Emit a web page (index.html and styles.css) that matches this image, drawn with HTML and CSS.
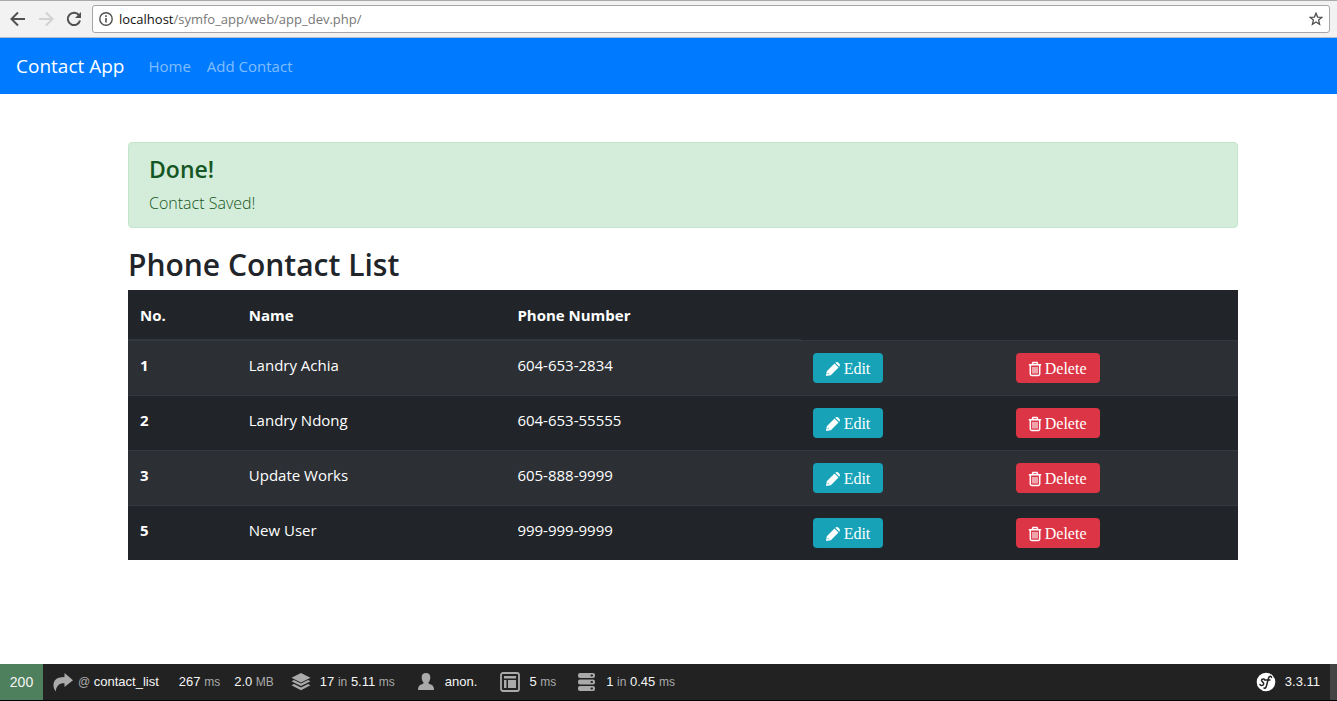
FILE: index.html
```html
<!DOCTYPE html>
<html lang="en">
<head>
<meta charset="utf-8">
<title>Contact App</title>
<link rel="stylesheet" href="styles.css">
</head>
<body>
<svg class="sprite" aria-hidden="true">
  <symbol id="pencil" viewBox="0 0 16 16"><path d="M1 15l.8-4.800L9.500 2.500l4 4-7.700 7.700zM10.300 1.700q1.500-1.500 3-.1l1.100 1.100q1.400 1.500-.1 3z" fill="#fff"/><path d="M2.800 12.200l1 1" stroke="#17a2b8" stroke-width="1"/></symbol>
  <symbol id="trash" viewBox="0 0 14 16"><path d="M.8 3.800h12.400M4.200 3.500l.8-2h4l.8 2M2.300 4v9q0 1.400 1.400 1.400h6.600q1.400 0 1.400-1.400V4" fill="none" stroke="#fff" stroke-width="1.500"/><path d="M5 6v6.500M7 6v6.500M9 6v6.500" stroke="#fff" stroke-width="1.100"/></symbol>
</svg>
<header class="browser">
  <button class="tool" aria-label="Back"><svg width="16" height="16" viewBox="0 0 16 16"><path d="M15 8H2M8 1.500L1.500 8 8 14.500" fill="none" stroke="#505050" stroke-width="2"/></svg></button>
  <button class="tool" aria-label="Forward" disabled><svg width="16" height="16" viewBox="0 0 16 16"><path d="M1 8h13M8 1.500L14.500 8 8 14.500" fill="none" stroke="#d2d2d2" stroke-width="2"/></svg></button>
  <button class="tool" aria-label="Reload"><svg width="16" height="16" viewBox="0 0 16 16"><path d="M13 4.200A6.200 6.200 0 1 0 14 9.500" fill="none" stroke="#505050" stroke-width="2"/><path d="M15 1v6H9z" fill="#505050"/></svg></button>
  <div class="address">
    <svg width="14" height="14" viewBox="0 0 14 14"><circle cx="7" cy="7" r="6.200" fill="none" stroke="#505050" stroke-width="1.400"/><path d="M6.200 6h1.600v4.500H6.200zM6.200 3.300h1.600v1.600H6.200z" fill="#505050"/></svg>
    <span class="url"><b>localhost</b>/symfo_app/web/app_dev.php/</span>
    <button class="star" aria-label="Bookmark this page"><svg width="14" height="14" viewBox="0 0 14 14"><path d="M7 1.200l1.600 3.900 4.200.3-3.200 2.700 1 4.200L7 10l-3.600 2.300 1-4.200L1.200 5.400l4.200-.3z" fill="none" stroke="#505050" stroke-width="1.300"/></svg></button>
  </div>
</header>
<nav class="navbar">
  <a class="brand" href="#">Contact App</a>
  <a class="link" href="#">Home</a>
  <a class="link" href="#">Add Contact</a>
</nav>
<main class="content">
  <div class="alert" role="alert">
    <h4>Done!</h4>
    <p>Contact Saved!</p>
  </div>
  <h2>Phone Contact List</h2>
  <table class="contacts">
    <colgroup><col class="c-no"><col class="c-name"><col class="c-phone"><col class="c-edit"><col></colgroup>
    <thead><tr><th>No.</th><th>Name</th><th>Phone Number</th><td></td><td></td></tr></thead>
    <tbody>
      <tr><th>1</th><td>Landry Achia</td><td>604-653-2834</td><td><a class="btn info" href="#"><svg><use href="#pencil"/></svg>Edit</a></td><td><a class="btn danger" href="#"><svg><use href="#trash"/></svg>Delete</a></td></tr>
      <tr><th>2</th><td>Landry Ndong</td><td>604-653-55555</td><td><a class="btn info" href="#"><svg><use href="#pencil"/></svg>Edit</a></td><td><a class="btn danger" href="#"><svg><use href="#trash"/></svg>Delete</a></td></tr>
      <tr><th>3</th><td>Update Works</td><td>605-888-9999</td><td><a class="btn info" href="#"><svg><use href="#pencil"/></svg>Edit</a></td><td><a class="btn danger" href="#"><svg><use href="#trash"/></svg>Delete</a></td></tr>
      <tr><th>5</th><td>New User</td><td>999-999-9999</td><td><a class="btn info" href="#"><svg><use href="#pencil"/></svg>Edit</a></td><td><a class="btn danger" href="#"><svg><use href="#trash"/></svg>Delete</a></td></tr>
    </tbody>
  </table>
</main>
<footer class="toolbar">
  <div class="status">200</div>
  <div class="block route"><svg width="20" height="20" viewBox="0 0 20 20"><path d="M11.500 1L20 8.200l-8.500 6.800v-3.600C7 11 3.800 13 2.600 19.500 0 15.500-.2 11.500 1.800 8.600 3.800 5.800 7.300 5 11.500 5z" fill="#aaa"/></svg><span><i>@</i> contact_list</span></div>
  <div class="block time">267 <i>ms</i></div>
  <div class="block memory">2.0 <i>MB</i></div>
  <div class="block cache"><svg width="20" height="20" viewBox="0 0 20 20"><path d="M10 1l9.500 4.700L10 10.400.5 5.700zM.5 9.200L3 8l7 3.500L17 8l2.500 1.200L10 14zM.5 13.200L3 12l7 3.500 7-3.500 2.500 1.200-9.500 5z" fill="#aaa"/></svg><span>17 <i>in</i> 5.11 <i>ms</i></span></div>
  <div class="block user"><svg width="16" height="20" viewBox="0 0 16 20"><path d="M8 1c3 0 4.500 2 4.300 4.700-.1 2-.8 3.900-2 5 .2 1 1.100 1.200 2.700 1.900 2 .9 3 2.700 3 5.400H0c0-2.700 1-4.500 3-5.400 1.600-.7 2.500-.9 2.700-1.900-1.200-1.100-1.900-3-2-5C3.500 3 5 1 8 1z" fill="#aaa"/></svg><span>anon.</span></div>
  <div class="block twig"><svg width="20" height="20" viewBox="0 0 20 20"><rect x="1" y="1" width="18" height="18" rx="2" fill="none" stroke="#aaa" stroke-width="1.800"/><path d="M4 4h12v2.500H4zM4 8h2.500v8H4zM8 8h8v8H8z" fill="#aaa"/></svg><span>5 <i>ms</i></span></div>
  <div class="block db"><svg width="18" height="20" viewBox="0 0 18 20"><rect x="0" y="1" width="17" height="5" rx="2" fill="#aaa"/><rect x="0" y="7.500" width="17" height="5" rx="2" fill="#aaa"/><rect x="0" y="14" width="17" height="5" rx="2" fill="#aaa"/><path d="M13.500 3.500h.5M13.500 10h.5M13.500 16.500h.5" stroke="#222" stroke-width="2" stroke-linecap="round"/></svg><span>1 <i>in</i> 0.45 <i>ms</i></span></div>
  <div class="block version"><svg width="20" height="20" viewBox="0 0 20 20"><circle cx="10" cy="10" r="9.300" fill="#fff"/><path d="M8.500 8c.2-1.500-2.800-1.500-3 .2-.2 1.600 2.500 1.800 2.200 3.800-.2 1.700-3.200 2-3.700.5M15.500 5.500c0-2-2.400-1.500-3 .8l-2 7.500c-.5 2-1.500 2.700-2.500 2.200M9.500 8h4.500" fill="none" stroke="#222" stroke-width="1.500" stroke-linecap="round"/></svg><span>3.3.11</span></div>
  <button class="hide" aria-label="Close toolbar"></button>
</footer>
</body>
</html>
```
FILE: styles.css
```css
* { box-sizing: border-box; }
body {
  margin: 0;
  min-height: 100vh;
  display: flex;
  flex-direction: column;
  background: #fff;
  color: #212529;
  font: 15px/24px "Open Sans", "Noto Sans", sans-serif;
}
h2, h4, p { margin: 0; }
a { text-decoration: none; }
button { border: 0; padding: 0; background: none; }
svg { display: block; flex: none; }
.sprite { position: absolute; width: 0; height: 0; }

.browser {
  display: flex;
  align-items: center;
  gap: 12px;
  height: 38px;
  padding: 0 7px 0 10px;
  background: #f2f2f2;
  border-top: 1px solid #aaa;
  border-bottom: 1px solid #b4bccb;
}
.tool { width: 16px; height: 16px; }
.address {
  flex: 1;
  display: flex;
  align-items: center;
  gap: 6px;
  height: 28px;
  margin-left: -2px;
  padding: 0 6px;
  background: #fff;
  border: 1px solid #a6a6a6;
  border-radius: 3px;
}
.url { flex: 1; font-size: 13px; color: #777; }
.url b { font-weight: 400; color: #111; }

.navbar {
  display: flex;
  align-items: center;
  height: 56px;
  padding: 0 16px;
  background: #007bff;
}
.brand { margin-right: 16px; font-size: 19px; color: #fff; }
.link { padding: 0 8px; color: #80bdff; }

.content { flex: 1; padding: 48px 99px 32px 128px; }
.alert {
  margin-bottom: 16px;
  padding: 12px 20px;
  color: #155724;
  background: #d4edda;
  border: 1px solid #c3e6cb;
  border-radius: 4px;
}
.alert h4 { margin-bottom: 8px; font-size: 23px; line-height: 28px; font-weight: 600; }
.alert p { font-size: 16px; font-weight: 300; }
h2 { margin-bottom: 4px; font-size: 30px; line-height: 42px; font-weight: 600; }

.contacts {
  width: 100%;
  table-layout: fixed;
  border-spacing: 0;
  color: #fff;
  background: #212529;
}
.c-no { width: 9.8%; }
.c-name { width: 24.2%; }
.c-phone { width: 26.6%; }
.c-edit { width: 18.3%; }
.contacts th, .contacts td { padding: 12px; text-align: left; vertical-align: top; }
.contacts thead tr { height: 50px; }
.contacts thead th { padding-top: 13px; border-bottom: 1px solid #32383e; }
.contacts tbody tr { height: 55px; }
.contacts tbody th, .contacts tbody td { border-top: 1px solid #32383e; }
.contacts tbody tr:nth-child(odd) { background: #2c3034; }
.btn {
  display: inline-flex;
  align-items: center;
  gap: 3px;
  height: 30px;
  padding: 1px 13px 0 12px;
  border-radius: 4px;
  color: #fff;
  font: 16px/30px "Liberation Serif", serif;
  vertical-align: top;
}
.info { background: #17a2b8; }
.danger { background: #dc3545; }
.info svg { width: 16px; height: 16px; }
.danger svg { width: 14px; height: 16px; }

.toolbar {
  display: flex;
  align-items: center;
  height: 37px;
  color: #f5f5f5;
  background: #222;
  border-bottom: 1px solid #000;
  font: 13px/36px "Liberation Sans", Arial, sans-serif;
}
.toolbar i { font-style: normal; font-size: 12px; color: #aaa; }
.status { width: 43px; text-align: center; font-size: 14px; background: #4f805d; }
.block { display: flex; align-items: center; white-space: pre; }
.route { gap: 5px; margin-left: 10px; }
.time { margin-left: 20px; }
.memory { margin-left: 14px; }
.cache { gap: 9px; margin-left: 17px; }
.user { gap: 11px; margin-left: 23px; }
.twig { gap: 9px; margin-left: 23px; }
.db { gap: 10px; margin-left: 22px; }
.version { gap: 9px; margin-left: auto; margin-right: 10px; }
.hide { width: 7px; height: 36px; background: #444; }
```
